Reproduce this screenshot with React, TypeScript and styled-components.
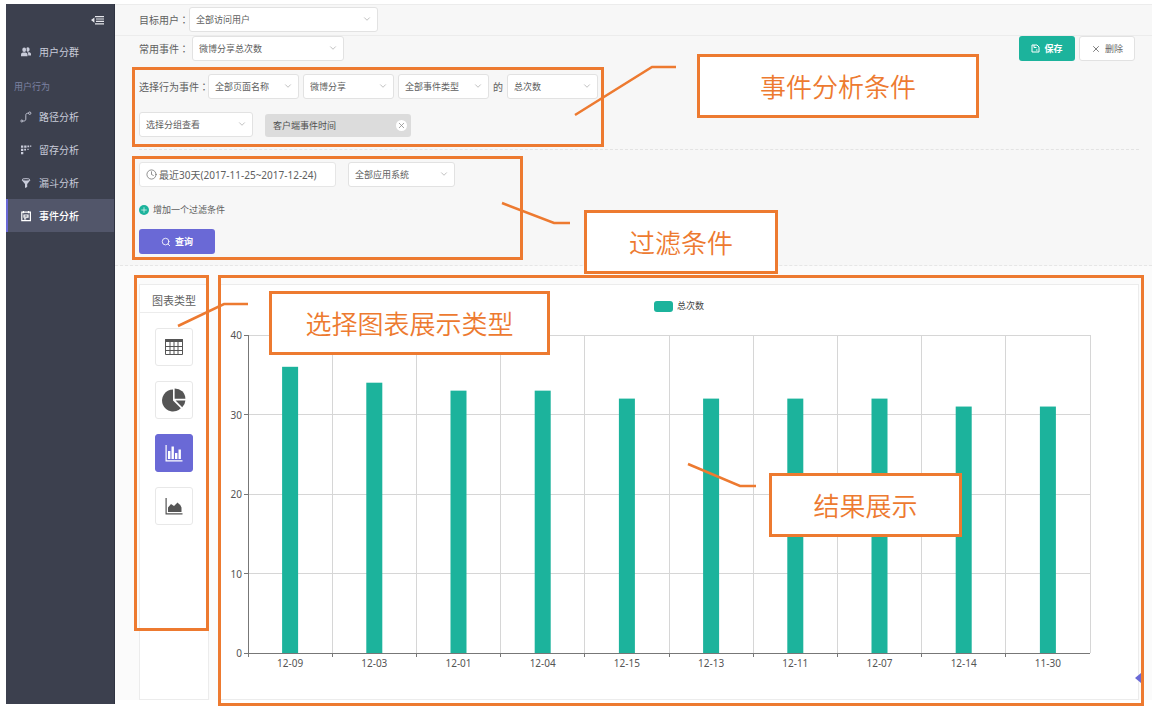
import React from 'react';
import styled, { createGlobalStyle, css } from 'styled-components';
import { ChevronDown, Clock, Search, X, Plus } from 'lucide-react';

const ORANGE = '#ed7a30';
const GREEN = '#1cb39c';
const PURPLE = '#6a69d6';

const GlobalStyle = createGlobalStyle`
  * { box-sizing: border-box; }
  body {
    margin: 0;
    background: #fff;
    color: #606060;
    font: 10px/16px "Noto Sans", "Noto Sans CJK SC", sans-serif;
  }
  button, select { font: inherit; color: inherit; margin: 0; padding: 0; }
  button { cursor: pointer; }
`;

const Shell = styled.div`
  position: relative;
  display: flex;
  padding: 4px 10px 16px 6px;
  min-height: 100vh;
`;

/* ---------- sidebar ---------- */

const Sidebar = styled.nav`
  flex: none;
  width: 109px;
  background: #3c404e;
  border-right: 1px solid #2f3341;
`;

const SidebarTop = styled.div`
  display: flex;
  justify-content: flex-end;
  align-items: center;
  height: 31px;
  padding-right: 10px;
`;

const CollapseButton = styled.button`
  display: flex;
  border: 0;
  background: none;
  color: #e6e7ec;
`;

const NavItem = styled.a<{ $active?: boolean }>`
  display: flex;
  align-items: center;
  gap: 7px;
  height: 33px;
  padding-left: 12px;
  border-left: 2px solid transparent;
  color: #c9ccda;
  text-decoration: none;
  svg { flex: none; }
  ${(p) =>
    p.$active &&
    css`
      background: #52566a;
      border-left-color: ${PURPLE};
      color: #fff;
      font-weight: 500;
    `}
`;

const NavHeading = styled.div`
  height: 32px;
  padding: 11px 0 0 8px;
  font-size: 9px;
  color: #7d83a3;
`;

/* ---------- main column ---------- */

const Main = styled.main`
  flex: 1;
  min-width: 0;
  display: flex;
  flex-direction: column;
  margin-bottom: 4px;
  background: #fbfbfb;
`;

const TargetBar = styled.div`
  display: flex;
  align-items: center;
  padding: 2px 24px 3px;
  background: #f7f7f7;
  border-top: 1px solid #ececec;
  border-bottom: 1px solid #ececec;
`;

const Conditions = styled.section`
  background: #f7f7f7;
  border-bottom: 1px dashed #e6e6e6;
  padding: 0 13px 11px 24px;
`;

const EventBlock = styled.div`
  display: flex;
  flex-direction: column;
  gap: 13px;
  padding-bottom: 12px;
  border-bottom: 1px dashed #e3e3e3;
`;

const FilterBlock = styled.div`
  display: flex;
  flex-direction: column;
  align-items: flex-start;
  padding-top: 12px;
`;

const Row = styled.div<{ $gap: number; $align?: string }>`
  display: flex;
  align-items: ${(p) => p.$align ?? 'center'};
  gap: ${(p) => p.$gap}px;
`;

const LabelBox = styled.label<{ $width: number }>`
  flex: none;
  width: ${(p) => p.$width}px;
  white-space: nowrap;
`;

const Colon = styled.span`
  font-family: "Noto Sans CJK TC", sans-serif;
`;

const Actions = styled.div`
  display: flex;
  gap: 4px;
  margin-left: auto;
  padding-right: 4px;
`;

const SelectBox = styled.div<{ $width: number }>`
  position: relative;
  flex: none;
  width: ${(p) => p.$width}px;
  svg {
    position: absolute;
    right: 6px;
    top: 7px;
    color: #b4b4b4;
    pointer-events: none;
  }
`;

const NativeSelect = styled.select`
  appearance: none;
  display: block;
  width: 100%;
  height: 25px;
  padding: 1px 18px 0 6px;
  border: 1px solid #e2e2e2;
  border-radius: 3px;
  background: #fff;
  font-size: 9px;
`;

const Button = styled.button<{ $tone: 'green' | 'purple' | 'plain'; $width: number }>`
  display: flex;
  align-items: center;
  justify-content: center;
  gap: 4px;
  width: ${(p) => p.$width}px;
  height: 25px;
  border-radius: 3px;
  border: 1px solid ${(p) => (p.$tone === 'plain' ? '#e2e2e2' : 'transparent')};
  background: ${(p) => ({ green: GREEN, purple: PURPLE, plain: '#fff' })[p.$tone]};
  color: ${(p) => (p.$tone === 'plain' ? '#666' : '#fff')};
  font-size: 9px;
  font-weight: ${(p) => (p.$tone === 'plain' ? 400 : 700)};
`;

const DateButton = styled.button`
  display: flex;
  align-items: center;
  gap: 2px;
  width: 197px;
  height: 25px;
  padding-left: 6px;
  border: 1px solid #e6e6e6;
  border-radius: 3px;
  background: #fff;
  white-space: nowrap;
`;

const Tag = styled.span`
  display: flex;
  align-items: center;
  justify-content: space-between;
  width: 146px;
  height: 23px;
  padding: 0 4px 0 8px;
  border-radius: 3px;
  background: #dcdcdc;
  font-size: 9px;
  color: #505050;
`;

const TagClose = styled.button`
  display: grid;
  place-items: center;
  width: 11px;
  height: 11px;
  border: 0;
  border-radius: 50%;
  background: #fff;
  color: #888;
`;

const AddFilter = styled.button`
  display: flex;
  align-items: center;
  gap: 4px;
  margin: 15px 0 11px;
  border: 0;
  background: none;
  font-size: 9px;
  line-height: 16px;
`;

const PlusDot = styled.span`
  display: grid;
  place-items: center;
  width: 10px;
  height: 10px;
  border-radius: 50%;
  background: ${GREEN};
  color: #fff;
`;

/* ---------- result area ---------- */

const Results = styled.section`
  flex: 1;
  display: flex;
  gap: 10px;
  padding: 18px 13px 0 24px;
`;

const TypePanel = styled.div`
  flex: none;
  width: 70px;
  background: #fff;
  border: 1px solid #ececec;
`;

const TypeTitle = styled.h2`
  margin: 0;
  height: 28px;
  padding-top: 8px;
  border-bottom: 1px solid #ececec;
  font-size: 11px;
  line-height: 16px;
  font-weight: 400;
  text-align: center;
`;

const TypeList = styled.div`
  display: flex;
  flex-direction: column;
  align-items: center;
  gap: 15px;
  padding-top: 15px;
`;

const TypeButton = styled.button<{ $active?: boolean }>`
  display: grid;
  place-items: center;
  width: 38px;
  height: 38px;
  border-radius: 3px;
  border: 1px solid ${(p) => (p.$active ? PURPLE : '#e8e8e8')};
  background: ${(p) => (p.$active ? PURPLE : '#fff')};
  color: ${(p) => (p.$active ? '#fff' : '#555')};
`;

const ChartCard = styled.div`
  position: relative;
  flex: 1;
  min-width: 0;
  background: #fff;
  border: 1px solid #ececec;
  padding: 13px 48px 0 28px;
`;

const Legend = styled.div`
  display: flex;
  align-items: center;
  justify-content: center;
  gap: 4px;
  margin: 0 -48px 21px -28px;
  font-size: 9px;
  color: #444;
`;

const Swatch = styled.span`
  width: 19px;
  height: 11px;
  border-radius: 3px;
  background: ${GREEN};
`;

const Plot = styled.svg`
  display: block;
  width: 100%;
  height: 318px;
  overflow: visible;
  font-size: 10px;
  fill: #555;
`;

const DrawerHandle = styled.button`
  position: absolute;
  right: -3px;
  bottom: 16px;
  width: 6px;
  height: 10px;
  border: 0;
  background: ${PURPLE};
  clip-path: polygon(0 50%, 100% 0, 100% 100%);
`;

/* ---------- annotations laid over the screen ---------- */

const Frame = styled.div<{ $x: number; $y: number; $w?: number; $h: number }>`
  position: absolute;
  left: ${(p) => p.$x}px;
  top: ${(p) => p.$y}px;
  ${(p) => (p.$w ? `width: ${p.$w}px;` : 'right: 18px;')}
  height: ${(p) => p.$h}px;
  border: 3px solid ${ORANGE};
  pointer-events: none;
`;

const Callout = styled(Frame)`
  display: grid;
  place-items: center;
  background: #fff;
  color: ${ORANGE};
  font: 350 26px/36px "Noto Sans CJK SC", sans-serif;
`;

const Leaders = styled.svg`
  position: absolute;
  left: 0;
  top: 0;
  pointer-events: none;
`;

/* ---------- icons ---------- */

const CollapseIcon = () => (
  <svg width="13" height="10" viewBox="0 0 13 10" fill="currentColor">
    <path d="M4 1h9v1.2H4zM5 3.4h8v1.2H5zM5 5.8h8V7H5zM4 8.2h9v1.2H4zM0 5.1l3.4-2.6v5.2z" />
  </svg>
);
const UsersIcon = () => (
  <svg width="12" height="12" viewBox="0 0 12 12" fill="currentColor">
    <ellipse cx="4.200" cy="3.800" rx="1.900" ry="2.300" />
    <path d="M1 10.200V8.600c0-1.400 1.200-2 3.200-2s3.300.6 3.300 2v1.600z" />
    <path d="M6.400 1.900C7.600.7 9.600 1.300 9.600 3.300c0 1.500-.7 2.500-1.600 2.500-.7 0-1.200-.5-1.400-1.100.2-1 .2-1.900-.2-2.800zM7.500 6.300c2.200-.2 3.500.5 3.500 1.800v1.400H8.200c0-1.300 0-2.300-.7-3.200z" />
  </svg>
);
const PathIcon = () => (
  <svg width="12" height="12" viewBox="0 0 12 12" fill="none" stroke="currentColor" strokeWidth="0.900">
    <path d="M2.800 10h1c1.400 0 2-.8 2-2V4.200c0-1.200.6-2 2-2h.8" />
    <circle cx="1.800" cy="10" r="1" />
    <circle cx="9.700" cy="2.200" r="1.200" />
  </svg>
);
const RetainIcon = () => (
  <svg width="12" height="12" viewBox="0 0 12 12" fill="currentColor">
    <path d="M1 1.500h2.300v2.300H1zM4.200 1.500h2.300v2.300H4.200zM7.400 1.500h1.800v1.800H7.400zM10 1.500h1.300v1.300H10zM1 4.700h2.300V7H1zM4.200 4.700h1.800v1.800H4.200zM7.400 4.700h1.200v1.200H7.400zM1 7.900h2.300v2.300H1z" />
  </svg>
);
const FunnelIcon = () => (
  <svg width="12" height="12" viewBox="0 0 12 12">
    <path fill="currentColor" d="M1.600 3L5 7v4l2.200-1.100V7l3.300-4z" />
    <ellipse cx="6" cy="2.800" rx="4" ry="1.200" fill="#3c404e" stroke="currentColor" strokeWidth="0.900" />
  </svg>
);
const EventIcon = () => (
  <svg width="12" height="12" viewBox="0 0 12 12" fill="none" stroke="currentColor" strokeWidth="1.200">
    <path d="M1.800 2.200h8.600v8.400H1.800zM3.500 1v2.300M8.500 1v2.300M4 5h4v2.200H4zM4 8.800h2.200" />
  </svg>
);
const SaveIcon = () => (
  <svg width="9" height="9" viewBox="0 0 9 9" fill="none" stroke="currentColor">
    <path d="M1 1h5l2 2v5H1zM3 1v2.500h2.500M5 6h1.500" />
  </svg>
);
const TableIcon = () => (
  <svg width="18" height="16" viewBox="0 0 18 16" fill="none" stroke="currentColor">
    <path d="M.5.5h17v15H.5zM.5 7.500h17M.5 11.500h17M5 3v12.500M9 3v12.500M13 3v12.500" />
    <path fill="currentColor" d="M.5.5h17v2H.5z" />
  </svg>
);
const PieIcon = () => (
  <svg width="24" height="24" viewBox="0 0 24 24" fill="currentColor">
    <path d="M11 1.500A11 11 0 1 0 18.800 20.300L11 12.500z" />
    <path d="M12.600.4v10.400H23.400A10.600 10.600 0 0 0 12.600.4z" />
    <path d="M13.600 12.400H23.400a10.600 10.600 0 0 1-3.200 6.800z" />
  </svg>
);
const BarIcon = () => (
  <svg width="18" height="18" viewBox="0 0 18 18" fill="currentColor">
    <path d="M.5 1h1.200v15.300H17.500v1.200H.5zM3 7h2.400v8H3zM6.500 2.500h2.400V15H6.500zM10 9h2.400v6H10zM13.500 5.500h2.400V15h-2.400z" />
  </svg>
);
const AreaIcon = () => (
  <svg width="18" height="18" viewBox="0 0 18 18" fill="currentColor">
    <path d="M.5 1h1.200v15.300H17.500v1.200H.5zM3 15v-4.500l3-3.500 3 2 3.500-3.500 2 2H15l1.500 3V15z" />
  </svg>
);

/* ---------- data ---------- */

const DATA: [string, number][] = [
  ['12-09', 36], ['12-03', 34], ['12-01', 33], ['12-04', 33], ['12-15', 32],
  ['12-13', 32], ['12-11', 32], ['12-07', 32], ['12-14', 31], ['11-30', 31],
];
const PLOT_H = 318;
const MAX = 40;

const NAV = [
  ['路径分析', PathIcon],
  ['留存分析', RetainIcon],
  ['漏斗分析', FunnelIcon],
  ['事件分析', EventIcon],
] as const;

const TYPES = [
  ['表格', TableIcon],
  ['饼图', PieIcon],
  ['柱状图', BarIcon],
  ['面积图', AreaIcon],
] as const;

function Label({ htmlFor, width, text }: { htmlFor: string; width: number; text: string }) {
  return (
    <LabelBox htmlFor={htmlFor} $width={width}>
      {text}<Colon>：</Colon>
    </LabelBox>
  );
}

function Select({ id, name, value, width }: { id?: string; name?: string; value: string; width: number }) {
  return (
    <SelectBox $width={width}>
      <NativeSelect id={id} aria-label={name}>
        <option>{value}</option>
      </NativeSelect>
      <ChevronDown size={10} />
    </SelectBox>
  );
}

function BarChart() {
  const step = 100 / DATA.length;
  return (
    <Plot role="img" aria-label="总次数">
      <g stroke="#d6d6d6" shapeRendering="crispEdges">
        {[10, 20, 30, 40].map((v) => {
          const y = PLOT_H * (1 - v / MAX);
          return <line key={v} x1="0" x2="100%" y1={y} y2={y} />;
        })}
        {DATA.map(([day], i) => (
          <line key={day} x1={`${(i + 1) * step}%`} x2={`${(i + 1) * step}%`} y1="0" y2={PLOT_H} />
        ))}
      </g>
      {DATA.map(([day, v], i) => {
        const h = (PLOT_H * v) / MAX;
        return (
          <g key={day}>
            <svg x={`${(i + 0.5) * step}%`} overflow="visible">
              <rect x="-8" y={PLOT_H - h} width="16" height={h} fill={GREEN} />
            </svg>
            <text x={`${(i + 0.5) * step}%`} y={PLOT_H + 14} textAnchor="middle">{day}</text>
          </g>
        );
      })}
      <g stroke="#777" shapeRendering="crispEdges">
        <line x1="0" x2="0" y1="0" y2={PLOT_H} />
        <line x1="0" x2="100%" y1={PLOT_H} y2={PLOT_H} />
        {DATA.map(([day], i) => (
          <line key={day} x1={`${i * step}%`} x2={`${i * step}%`} y1={PLOT_H} y2={PLOT_H + 4} />
        ))}
        {[0, 10, 20, 30, 40].map((v) => {
          const y = PLOT_H * (1 - v / MAX);
          return <line key={v} x1="-4" x2="0" y1={y} y2={y} />;
        })}
      </g>
      {[0, 10, 20, 30, 40].map((v) => (
        <text key={v} x="-6" y={PLOT_H * (1 - v / MAX) + 4} textAnchor="end">{v}</text>
      ))}
    </Plot>
  );
}

export default function App() {
  return (
    <>
      <GlobalStyle />
      <Shell>
        <Sidebar>
          <SidebarTop>
            <CollapseButton aria-label="收起菜单"><CollapseIcon /></CollapseButton>
          </SidebarTop>
          <NavItem href="#"><UsersIcon />用户分群</NavItem>
          <NavHeading>用户行为</NavHeading>
          {NAV.map(([text, Icon], i) => (
            <NavItem key={text} href="#" $active={i === 3}><Icon />{text}</NavItem>
          ))}
        </Sidebar>

        <Main>
          <TargetBar>
            <Label htmlFor="target" width={50} text="目标用户" />
            <Select id="target" value="全部访问用户" width={189} />
          </TargetBar>

          <Conditions>
            <EventBlock>
              <Row $gap={0}>
                <Label htmlFor="common" width={53} text="常用事件" />
                <Select id="common" value="微博分享总次数" width={152} />
                <Actions>
                  <Button $tone="green" $width={56}><SaveIcon />保存</Button>
                  <Button $tone="plain" $width={56}><X size={10} />删除</Button>
                </Actions>
              </Row>
              <Row $gap={4}>
                <Label htmlFor="page" width={65} text="选择行为事件" />
                <Select id="page" value="全部页面名称" width={91} />
                <Select name="事件" value="微博分享" width={91} />
                <Select name="事件类型" value="全部事件类型" width={91} />
                <span>的</span>
                <Select name="指标" value="总次数" width={91} />
              </Row>
              <Row $gap={12} $align="flex-end">
                <Select name="分组" value="选择分组查看" width={114} />
                <Tag>
                  客户端事件时间
                  <TagClose aria-label="移除"><X size={9} /></TagClose>
                </Tag>
              </Row>
            </EventBlock>

            <FilterBlock>
              <Row $gap={12}>
                <DateButton><Clock size={11} strokeWidth={1.5} />最近30天(2017-11-25~2017-12-24)</DateButton>
                <Select name="应用系统" value="全部应用系统" width={107} />
              </Row>
              <AddFilter>
                <PlusDot><Plus size={8} /></PlusDot>
                增加一个过滤条件
              </AddFilter>
              <Button $tone="purple" $width={76}><Search size={10} />查询</Button>
            </FilterBlock>
          </Conditions>

          <Results>
            <TypePanel>
              <TypeTitle>图表类型</TypeTitle>
              <TypeList>
                {TYPES.map(([name, Icon], i) => (
                  <TypeButton key={name} aria-label={name} aria-pressed={i === 2} $active={i === 2}>
                    <Icon />
                  </TypeButton>
                ))}
              </TypeList>
            </TypePanel>
            <ChartCard>
              <Legend><Swatch />总次数</Legend>
              <BarChart />
              <DrawerHandle aria-label="展开" />
            </ChartCard>
          </Results>
        </Main>

        <Frame $x={132} $y={67} $w={472} $h={80} />
        <Frame $x={132} $y={156} $w={391} $h={104} />
        <Frame $x={134} $y={275} $w={75} $h={356} />
        <Frame $x={218} $y={275} $h={431} />
        <Callout $x={697} $y={54} $w={282} $h={64}>事件分析条件</Callout>
        <Callout $x={584} $y={210} $w={194} $h={64}>过滤条件</Callout>
        <Callout $x={269} $y={291} $w={281} $h={64}>选择图表展示类型</Callout>
        <Callout $x={769} $y={473} $w={193} $h={64}>结果展示</Callout>
        <Leaders width="980" height="540" fill="none" stroke={ORANGE} strokeWidth="2.500">
          <path d="M676 67H652L575 115" />
          <path d="M570 223H554L502 203" />
          <path d="M248 304H224L178 326" />
          <path d="M756 486H740L688 464" />
        </Leaders>
      </Shell>
    </>
  );
}
